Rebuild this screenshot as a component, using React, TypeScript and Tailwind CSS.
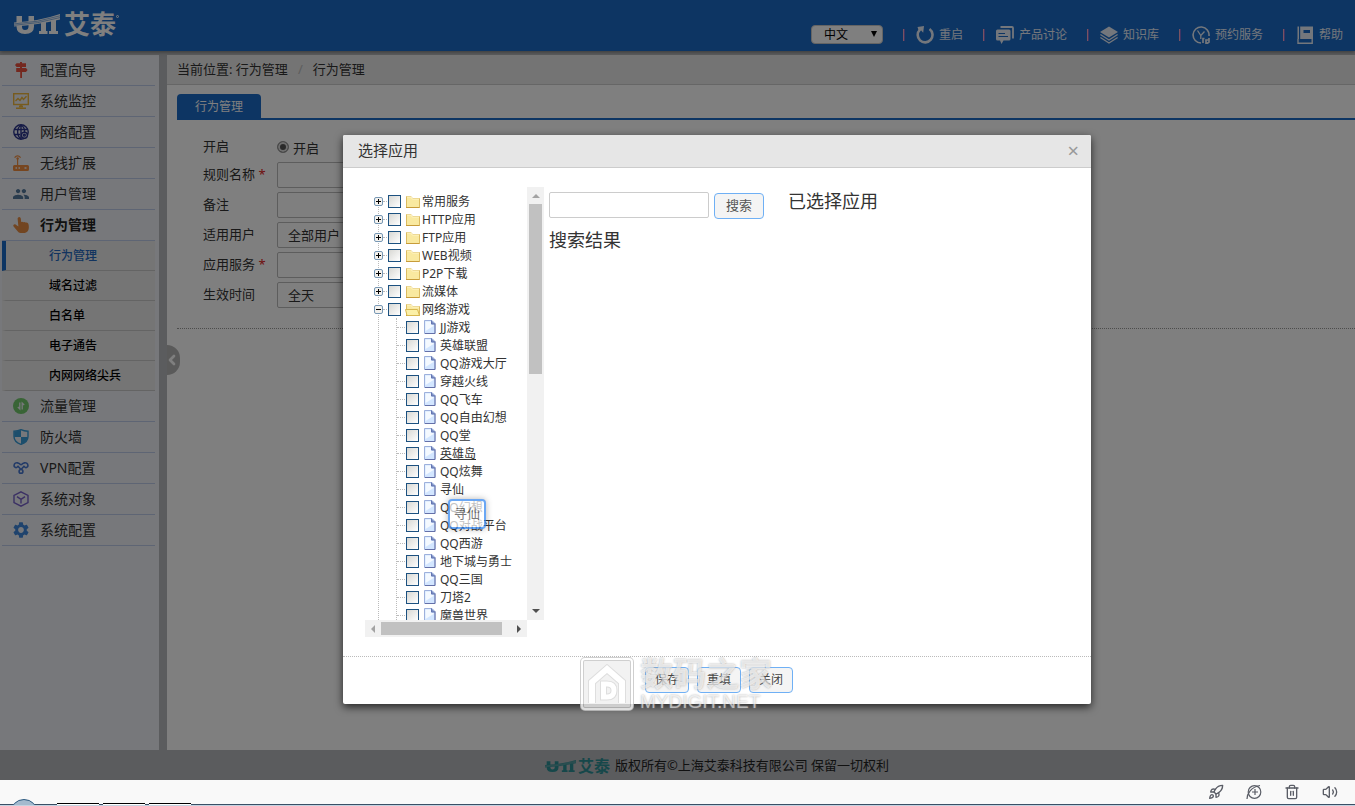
import React from 'react';
import { ChevronLeft, Rocket, Trash2, Volume2 } from 'lucide-react';
import { MdPeople, MdSettings } from 'react-icons/md';

type IconProps = { className?: string };

const SignIcon = ({ className }: IconProps) => (
  <svg viewBox="0 0 16 16" className={className} fill="currentColor">
    <path d="M7 0 H9 V1.2 H13 V5 H3.6 L2 3.1 L3.6 1.2 H7 Z M3.2 6 H13 L14.6 8 L13 10 H9 V16 H7.2 V10 H3.2 Z M7 5 H9 V6 H7 Z" />
  </svg>
);

const MonitorIcon = ({ className }: IconProps) => (
  <svg viewBox="0 0 16 16" className={className} fill="none" stroke="currentColor">
    <rect x="0.7" y="0.7" width="14.6" height="10.8" strokeWidth="1.4" />
    <path d="M2.5 8 L5 5.5 L7 7.5 L9 4.5 L10.5 6.5 L13.5 3.2" strokeWidth="1.4" />
    <path d="M8 11.5 V14 M3 15.2 H13 M6 13.4 H10" strokeWidth="1.6" />
  </svg>
);

const GlobeIcon = ({ className }: IconProps) => (
  <svg viewBox="0 0 16 16" className={className} fill="none" stroke="currentColor" strokeWidth="1.4">
    <circle cx="8" cy="8" r="7.2" />
    <path d="M8 1 C3.5 4 3.5 12 8 15 M8 1 C11 3 11.8 6 11.5 8 M1 5.5 H15 M1 10.5 H7 M8 1 V15" />
    <circle cx="11.4" cy="11.2" r="3" fill="#eef1f6" />
    <circle cx="11.4" cy="11.2" r="0.9" />
  </svg>
);

const RouterIcon = ({ className }: IconProps) => (
  <svg viewBox="0 0 16 16" className={className} fill="currentColor">
    <path d="M1.5 10 H14.5 Q16 10 16 11.5 V14.5 Q16 16 14.5 16 H1.5 Q0 16 0 14.5 V11.5 Q0 10 1.5 10 Z M4 3.5 H5.2 V10 H4 Z" />
    <circle cx="4.6" cy="3.4" r="1.2" />
    <path d="M1.6 2.6 Q4.6 -0.8 7.6 2.6" fill="none" stroke="currentColor" strokeWidth="1.3" />
    <path d="M2.5 13 H4 M5.5 13 H7 M11.5 13 H13.5" stroke="#eef1f6" strokeWidth="1.4" />
  </svg>
);

const PeopleIcon = ({ className }: IconProps) => <MdPeople viewBox="1 3 22 18" className={className} />;

const HandIcon = ({ className }: IconProps) => (
  <svg viewBox="0 0 16 16" className={className} fill="currentColor">
    <path d="M4.6 1.6 Q4.8 0 6.2 0 Q7.6 0 7.8 1.6 L8.2 5 Q9.4 4.4 10.4 5.2 Q11.6 4.6 12.6 5.5 Q14.2 5 15.2 6.6 Q16 8 15.8 11 Q15.6 15 11.8 16 H7.5 Q5.6 16 4.4 14 L0.6 9.4 Q-0.2 8 1 7.4 Q2.4 6.9 3.6 8.2 L5.4 9.4 Z" />
  </svg>
);

const FlowIcon = ({ className }: IconProps) => (
  <svg viewBox="0 0 16 16" className={className}>
    <circle cx="8" cy="8" r="8" fill="currentColor" />
    <path d="M6.8 4.5 V11 L4.8 9 M9.2 11.5 V5 L11.2 7" fill="none" stroke="#eef1f6" strokeWidth="1.3" />
  </svg>
);

const ShieldIcon = ({ className }: IconProps) => (
  <svg viewBox="0 0 16 16" className={className}>
    <path d="M8 0.7 Q11 2.2 15 2.2 V7.5 Q15 13 8 15.4 Q1 13 1 7.5 V2.2 Q5 2.2 8 0.7 Z" fill="#eef1f6" stroke="currentColor" strokeWidth="1.4" />
    <path d="M8 1 V8 H1.2 V2.4 Q5 2.4 8 1 Z M8 8 H14.8 Q14.5 13 8 15.2 Z" fill="currentColor" />
  </svg>
);

const VpnIcon = ({ className }: IconProps) => (
  <svg viewBox="0 0 16 16" className={className} fill="none" stroke="currentColor" strokeWidth="1.6">
    <path d="M8 9.5 L4.5 5.8 M8 9.5 L11.5 5.8 M7.8 5.2 C6.5 2.5 2.5 2 1.4 4.2 C0.2 7 3 8.5 4.6 6.8 M8.2 5.2 C9.5 2.5 13.5 2 14.6 4.2 C15.8 7 13 8.5 11.4 6.8" />
    <circle cx="8" cy="11.4" r="1.9" />
  </svg>
);

const CubeIcon = ({ className }: IconProps) => (
  <svg viewBox="0 0 16 16" className={className} fill="none" stroke="currentColor" strokeWidth="1.4">
    <path d="M8 0.8 L15 4.4 V11.6 L8 15.2 L1 11.6 V4.4 Z M4 5.6 L8 8.3 L12 5.6 M8 8.3 V12.5" />
  </svg>
);

const GearIcon = ({ className }: IconProps) => <MdSettings viewBox="2 2 20 20" className={className} />;

const RestartIcon = ({ className }: IconProps) => (
  <svg viewBox="0 0 18 18" className={className}>
    <path d="M13.5 3 A7.4 7.4 0 1 1 4 3.6" fill="none" stroke="currentColor" strokeWidth="2.6" />
    <path d="M1.5 1 L8 0 L7.2 6.8 L5.2 4.6 L2.8 5 Z" fill="currentColor" />
  </svg>
);

const TalkIcon = ({ className }: IconProps) => (
  <svg viewBox="0 0 18 18" className={className}>
    <path d="M4.5 1 H16 Q17 1 17 2 V12.5" fill="none" stroke="currentColor" strokeWidth="1.8" />
    <path d="M1.5 3.5 H13 Q14.5 3.5 14.5 5 V13 Q14.5 14.5 13 14.5 H7.5 L5.5 18 L4 14.5 H1.5 Q0 14.5 0 13 V5 Q0 3.5 1.5 3.5 Z" fill="currentColor" />
    <path d="M2.5 7.5 H9 M2.5 10.5 H12" stroke="#1a6ac6" strokeWidth="1.2" />
  </svg>
);

const BooksIcon = ({ className }: IconProps) => (
  <svg viewBox="0 0 18 18" className={className}>
    <path d="M9 0.5 L18 6 L9 11.5 L0 6 Z" fill="currentColor" />
    <path d="M0.4 8.5 L9 14 L17.6 8.5 M0.4 11.5 L9 17 L17.6 11.5" fill="none" stroke="currentColor" strokeWidth="1.4" />
  </svg>
);

const BookingIcon = ({ className }: IconProps) => (
  <svg viewBox="0 0 18 18" className={className} fill="none" stroke="currentColor">
    <path d="M9 17 A8 8 0 1 1 17 10" strokeWidth="1.6" />
    <path d="M5.5 4.5 L8.8 9.5 L12.5 5.5 M8.8 9.5 V13" strokeWidth="1.3" />
    <path d="M11 17 V12.5 H12.5 M17 12 V16 L15.5 17.2 H14 V14 H17" strokeWidth="1.7" />
  </svg>
);

const HelpIcon = ({ className }: IconProps) => (
  <svg viewBox="0 0 18 18" className={className}>
    <path d="M1.5 0.5 H3 V13 H1.5 Z M4.2 0.5 H17 V13 H4.2 Z" fill="currentColor" />
    <path d="M7.5 4 H14 V7 H7.5 Z" fill="#1a6ac6" />
    <path d="M2 13 V17.2 H16.2 V13" fill="none" stroke="currentColor" strokeWidth="1.4" />
  </svg>
);

const UttMark = ({ className, gap = '#1a6ac6' }: IconProps & { gap?: string }) => (
  <svg viewBox="0 0 46 20" className={className} preserveAspectRatio="none">
    <path d="M2.5 2 H8 V12.5 Q8 16 11 16 Q14.5 16 14.5 12.5 V2 H20 V12.5 Q20 20 11 20 Q2.5 20 2.5 12.5 Z" fill="currentColor" />
    <path d="M27 8 H32 V17 H33.5 V20 H25 V17 H27 Z M37 6 H42 V17 H44 V20 H35 V17 H37 Z" fill="currentColor" />
    <path d="M0 8.5 Q24 7.5 46 0 V5.5 Q24 11 0 12.5 Z" fill="currentColor" />
    <path d="M0 9.9 Q24 8.6 46 1.8 M0 11.3 Q24 9.9 46 3.6" fill="none" stroke={gap} strokeWidth="0.5" />
  </svg>
);

const Folder = ({ open }: { open?: boolean }) => (
  <svg viewBox="0 0 15 13" className="h-[13px] w-[15px] shrink-0">
    <path d="M1.5 1.5 H6 L7.5 3.5 H14.5 V12.5 H1.5 Z" fill="#f9e9a0" stroke="#dcbc62" strokeWidth="1" />
    <path d="M2 2 H6 L7.3 4 H14" fill="none" stroke="#fff6c8" strokeWidth="1" />
    <path d="M1 12.5 H14.5" stroke="#c79c3a" strokeWidth="1" />
    {open && <path d="M0.5 6.5 H12.5 L14.5 12.5 H2 Z" fill="#fbf0a8" stroke="#d8b850" strokeWidth="1" />}
  </svg>
);

const Doc = () => (
  <svg viewBox="0 0 12 14" className="h-[14px] w-[12px] shrink-0">
    <path d="M0.5 0.5 H8 L11 3.5 V13.5 H0.5 Z" fill="#d3e6ff" stroke="#9db0dc" strokeWidth="1" />
    <path d="M1.5 1.5 H7 V5 H9.5 V6 L1.5 11 Z" fill="#f4f9ff" />
    <path d="M7.5 0.5 V4 H11" fill="#7b8fc4" stroke="#6474b0" strokeWidth="1" />
    <path d="M11 3.5 V13.5 H1" fill="none" stroke="#6470a8" strokeWidth="1" />
  </svg>
);

const menu = [
  { name: '配置向导', icon: SignIcon, color: 'text-[#e8503f]' },
  { name: '系统监控', icon: MonitorIcon, color: 'text-[#eeb63c]' },
  { name: '网络配置', icon: GlobeIcon, color: 'text-[#2a348c]' },
  { name: '无线扩展', icon: RouterIcon, color: 'text-[#ee8c40]' },
  { name: '用户管理', icon: PeopleIcon, color: 'text-[#54789c]' },
  { name: '行为管理', icon: HandIcon, color: 'text-[#e48a42]', sub: ['行为管理', '域名过滤', '白名单', '电子通告', '内网网络尖兵'] },
  { name: '流量管理', icon: FlowIcon, color: 'text-[#72c86c]' },
  { name: '防火墙', icon: ShieldIcon, color: 'text-[#389cd8]' },
  { name: 'VPN配置', icon: VpnIcon, color: 'text-[#4676d0]' },
  { name: '系统对象', icon: CubeIcon, color: 'text-[#765fc8]' },
  { name: '系统配置', icon: GearIcon, color: 'text-[#3f86da]' },
];

const links = [
  { name: '重启', icon: RestartIcon },
  { name: '产品讨论', icon: TalkIcon },
  { name: '知识库', icon: BooksIcon },
  { name: '预约服务', icon: BookingIcon },
  { name: '帮助', icon: HelpIcon },
];

const folders = ['常用服务', 'HTTP应用', 'FTP应用', 'WEB视频', 'P2P下载', '流媒体', '网络游戏'];

const games = [
  'JJ游戏', '英雄联盟', 'QQ游戏大厅', '穿越火线', 'QQ飞车', 'QQ自由幻想', 'QQ堂', '英雄岛', 'QQ炫舞',
  '寻仙', 'QQ幻想', 'QQ对战平台', 'QQ西游', '地下城与勇士', 'QQ三国', '刀塔2', '魔兽世界',
];

const fields = [
  { id: 'rule', label: '规则名称', required: true },
  { id: 'remark', label: '备注' },
  { id: 'user', label: '适用用户', options: ['全部用户'] },
  { id: 'service', label: '应用服务', required: true },
  { id: 'time', label: '生效时间', options: ['全天'] },
];

const box = 'size-[13px] shrink-0 appearance-none border border-[#1c5180] bg-linear-to-br from-[#d8d8d4] to-white';

const Header = () => (
  <header className="relative flex h-[51px] shrink-0 justify-between bg-[#1a6ac6] pl-3.5 pr-3 shadow-[0_1px_4px_rgba(0,0,0,0.4)]">
    <a href="#home" className="flex h-12 items-center gap-1 text-white">
      <UttMark className="h-5 w-[46px]" />
      <span className="text-[26px] leading-none font-bold">艾泰</span>
      <span className="-ml-1 mb-4 size-[3px] rounded-full border border-white" />
    </a>
    <nav className="flex items-center gap-5 pt-[18px] text-xs text-[#e8eef8]">
      <div className="relative">
        <select aria-label="语言" className="block h-[19px] w-[72px] appearance-none rounded border border-[#c8c8c8] bg-white pl-3 text-xs text-black">
          <option>中文</option>
        </select>
        <span className="pointer-events-none absolute right-[6px] top-[6px] border-x-3 border-t-6 border-x-transparent border-t-black" />
      </div>
      {links.map(({ name, icon: Icon }) => (
        <a key={name} href="#top" className="flex items-center">
          <span className="mr-[11px] h-3 w-0.5 border-l border-[#f4a6c4] bg-[#7a68c8]" />
          <Icon className="mr-[5px] size-[18px]" />
          {name}
        </a>
      ))}
    </nav>
  </header>
);

const Sidebar = () => (
  <aside className="w-[159px] shrink-0 bg-[#eef1f6] pl-0.5 pr-1">
    <ul>
      {menu.map(({ name, icon: Icon, color, sub }) => (
        <li key={name}>
          <a
            href="#menu"
            className={`flex h-[31px] items-center gap-[11px] border-b border-[#bccbe8] pl-[11px] text-sm ${sub ? 'font-bold text-[#222]' : 'text-[#333]'}`}
          >
            <Icon className={`size-4 ${color}`} />
            {name}
          </a>
          {sub && (
            <ul className="bg-[#ebebeb]">
              {sub.map((s, i) => (
                <li key={s}>
                  <a
                    href="#sub"
                    className={`flex h-[30px] items-center border-b border-b-[#c8c8c8] border-l-4 pl-[43px] text-xs font-medium ${i === 0 ? 'border-l-[#1a6ac6] text-[#2468bf]' : 'border-l-transparent text-black'}`}
                  >
                    {s}
                  </a>
                </li>
              ))}
            </ul>
          )}
        </li>
      ))}
    </ul>
  </aside>
);

const Main = () => (
  <main className="relative ml-2 min-w-0 grow bg-white text-[13px] text-[#333]">
    <div className="flex h-[30px] items-center border-b border-[#ccc] bg-[#e8e8e8] pl-2.5">
      <span>当前位置: 行为管理</span>
      <span className="px-2.5 text-[#bbb]">/</span>
      <span>行为管理</span>
    </div>
    <div className="pl-2.5 pt-[9px]">
      <div className="flex border-b-2 border-[#1a6ac6]">
        <button className="h-6 rounded-t bg-[#1a6ac6] px-[18px] pt-0.5 text-xs text-white">行为管理</button>
      </div>
      <form className="flex flex-col gap-1 border-b border-dotted border-[#999] pl-[26px] pt-4 pb-5">
        <div className="flex h-[22px] items-center">
          <span className="w-[74px]">开启</span>
          <input
            id="on"
            type="radio"
            name="state"
            defaultChecked
            className="mr-1 size-3 appearance-none rounded-full border border-[#999] bg-[#555] shadow-[inset_0_0_0_2px_#ddd]"
          />
          <label htmlFor="on" className="pt-1">开启</label>
        </div>
        {fields.map((f) => (
          <div key={f.id} className="flex h-[26px] items-center">
            <label htmlFor={f.id} className="w-[74px]">
              {f.label} {f.required && <span className="text-[#e02020]">*</span>}
            </label>
            {f.options ? (
              <select id={f.id} className="h-[26px] w-40 appearance-none rounded-xs border border-[#bbb] pl-2.5 pt-0.5">
                {f.options.map((o) => <option key={o}>{o}</option>)}
              </select>
            ) : (
              <input id={f.id} type="text" className="h-[26px] w-40 rounded-xs border border-[#bbb]" />
            )}
          </div>
        ))}
      </form>
    </div>
    <button aria-label="收起" className="absolute left-0 top-[290px] flex h-[30px] w-[13px] items-center justify-center rounded-r-full bg-[#b4b4b4] text-white">
      <ChevronLeft className="mr-1 size-4 shrink-0" strokeWidth={4} />
    </button>
  </main>
);

const Tree = () => (
  <div className="w-[179px] shrink-0">
    <div className="flex h-[433px]">
      <div className="w-[162px] overflow-hidden pt-[5px] pl-[9px]">
        <ul className="relative text-xs text-[#333]">
          <li aria-hidden="true" className="absolute left-1 top-3 h-[440px] border-l border-dotted border-[#bbb]" />
          {folders.map((f, i) => {
            const open = i === folders.length - 1;
            return (
              <li key={f} className="relative flex h-[18px] items-center">
                <button aria-label={open ? '折叠' : '展开'} className="relative size-[9px] shrink-0 rounded-xs border border-[#7898b5] bg-[#f4f2ee]">
                  <span className="absolute left-px top-[3px] h-px w-[5px] bg-black" />
                  {!open && <span className="absolute left-[3px] top-px h-[5px] w-px bg-black" />}
                </button>
                <span className="mr-px w-1 border-t border-dotted border-[#bbb]" />
                <label className="flex h-4 items-center whitespace-nowrap">
                  <input type="checkbox" className={`${box} mr-1`} />
                  <Folder open={open} />
                  <span className="ml-0.5 pt-0.5">{f}</span>
                </label>
              </li>
            );
          })}
          <li className="ml-[22px] border-l border-dotted border-[#bbb]">
            <ul>
              {games.map((g) => (
                <li key={g} className="flex h-[18px] items-center">
                  <span className="mr-px w-2 border-t border-dotted border-[#bbb]" />
                  <label className="flex h-4 items-center whitespace-nowrap">
                    <input type="checkbox" className={`${box} mr-[5px]`} />
                    <Doc />
                    <span className={`ml-1 pt-0.5 ${g === '英雄岛' ? 'underline' : ''}`}>{g}</span>
                  </label>
                </li>
              ))}
            </ul>
          </li>
        </ul>
      </div>
      <div className="flex w-[17px] flex-col items-center bg-[#f1f1f1]">
        <span className="my-[7px] border-x-4 border-b-4 border-x-transparent border-b-[#a3a3a3]" />
        <span className="-mt-px h-[170px] w-[13px] bg-[#c1c1c1]" />
        <span className="mt-auto mb-[7px] border-x-4 border-t-4 border-x-transparent border-t-[#505050]" />
      </div>
    </div>
    <div className="flex h-[17px] w-[162px] items-center bg-[#f1f1f1]">
      <span className="mx-1.5 border-y-4 border-r-4 border-y-transparent border-r-[#a3a3a3]" />
      <span className="h-[13px] w-[121px] bg-[#c1c1c1]" />
      <span className="ml-auto mr-1.5 border-y-4 border-l-4 border-y-transparent border-l-[#505050]" />
    </div>
  </div>
);

const Watermark = () => (
  <div className="pointer-events-none absolute bottom-[-8px] left-[237px] flex items-center gap-1.5 whitespace-nowrap opacity-80">
    <svg viewBox="0 0 54 54" className="size-[54px]" fill="none">
      <rect x="2" y="2" width="50" height="50" rx="3" fill="#f0f0f0" stroke="#c4c4c4" strokeWidth="4" />
      <rect x="2" y="2" width="50" height="50" rx="3" stroke="#fff" strokeWidth="2" />
      <g stroke="#d6d6d6">
        <path d="M12 46 V25 L27 12 L42 25 V46" strokeWidth="8" />
        <path d="M23.5 27 H27 Q34 27 34 33.5 Q34 40 27 40 H23.5 Z" strokeWidth="7" />
      </g>
      <g stroke="#fff">
        <path d="M12 46 V25 L27 12 L42 25 V46" strokeWidth="6" />
        <path d="M23.5 27 H27 Q34 27 34 33.5 Q34 40 27 40 H23.5 Z" strokeWidth="5" />
      </g>
    </svg>
    <div className="text-white/70 [text-shadow:0_0_2px_#999]">
      <div className="text-[33px] leading-9 font-bold">数码之家</div>
      <div className="font-['Liberation_Sans',sans-serif] text-[19px] leading-5">MYDIGIT.NET</div>
    </div>
  </div>
);

const Dialog = () => (
  <div role="dialog" aria-labelledby="dialog-title" className="relative w-[748px] max-w-full rounded-xs bg-white text-[#333] shadow-[0_3px_9px_rgba(0,0,0,0.7)]">
    <div className="flex h-[33px] items-center justify-between rounded-t-xs border-b border-[#ccc] bg-[#e6e6e6] pl-[15px] pr-3">
      <h1 id="dialog-title" className="pb-px text-[15px]">选择应用</h1>
      <button aria-label="关闭窗口" className="text-xl leading-none text-[#999]">×</button>
    </div>
    <div className="flex pt-[19px] pb-[19px] pl-[22px]">
      <Tree />
      <div className="pt-[5px] pl-[5px]">
        <div className="flex items-start gap-[5px]">
          <input aria-label="搜索" type="text" className="h-[26px] w-40 rounded-xs border border-[#ccc]" />
          <button className="mt-px h-[26px] w-[50px] rounded border border-[#6fb0f5] bg-[#f4f4f4] text-[13px] text-[#555]">搜索</button>
        </div>
        <h2 className="mt-[7px] text-lg">搜索结果</h2>
      </div>
      <h2 className="pl-6 text-lg">已选择应用</h2>
    </div>
    <div className="flex justify-center gap-2 border-t border-dotted border-[#bbb] pt-2.5 pb-[11px] pl-1">
      {['保存', '重填', '关闭'].map((b) => (
        <button key={b} className="h-[26px] w-11 rounded border border-[#6fb0f5] bg-[#f4f4f4] text-xs text-[#444]">{b}</button>
      ))}
    </div>
    {/* label being dragged out of the tree */}
    <div className="absolute left-[105px] top-[364px] flex h-[30px] w-[38px] items-center justify-center rounded border-2 border-[#2c82f0] bg-white text-[13px] text-[#444] opacity-70 shadow-[0_0_6px_rgba(0,0,0,0.4)]">
      寻仙
    </div>
    <Watermark />
  </div>
);

const BrowserBar = () => (
  <div className="relative h-[26px] shrink-0 overflow-hidden border-b border-[#c4d2e0] bg-[#f9f9f9]">
    <div className="flex h-[25px] items-center justify-end gap-[22px] border-b border-[#3a4f66] pr-[17px] text-[#5a5d66]">
      <Rocket className="size-4" strokeWidth={2} />
      <svg viewBox="0 0 16 16" className="size-4" fill="none" stroke="currentColor" strokeWidth="1.2">
        <circle cx="8.5" cy="8" r="6.3" />
        <path d="M1 15 C1 10 5 3 14 1.5 M6 8 H12 M9 5 V11" />
      </svg>
      <Trash2 className="size-4" strokeWidth={2} />
      <Volume2 className="size-4" strokeWidth={2} />
    </div>
    <span className="absolute left-2.5 top-[19px] size-7 rounded-full border border-[#2d5a80] bg-[#a4bace]" />
    <div className="absolute bottom-0 left-[57px] flex gap-1">
      <span className="h-0.5 w-[42px] border-t border-black bg-white" />
      <span className="h-0.5 w-[42px] border-t border-black bg-white" />
      <span className="h-0.5 w-[42px] border-t border-black bg-white" />
    </div>
  </div>
);

export default function App() {
  return (
    <div className="flex min-h-screen flex-col font-['Noto_Sans','Noto_Sans_CJK_SC',sans-serif]">
      <div className="relative flex grow flex-col bg-[#b6b8bc]">
        <Header />
        <div className="flex grow pt-1">
          <Sidebar />
          <Main />
        </div>
        <footer className="flex h-[30px] items-center justify-center gap-[5px] pt-0.5 pl-[79px] text-[13px] text-[#222]">
          <span className="flex items-center gap-0.5 text-[#2c8f94]">
            <UttMark className="h-3 w-[31px]" gap="#b6b8bc" />
            <span className="text-base leading-none font-bold">艾泰</span>
          </span>
          版权所有©上海艾泰科技有限公司 保留一切权利
        </footer>
        <div className="absolute inset-0 flex items-start justify-center bg-black/50 pt-[135px] pl-[79px]">
          <Dialog />
        </div>
      </div>
      <BrowserBar />
    </div>
  );
}
